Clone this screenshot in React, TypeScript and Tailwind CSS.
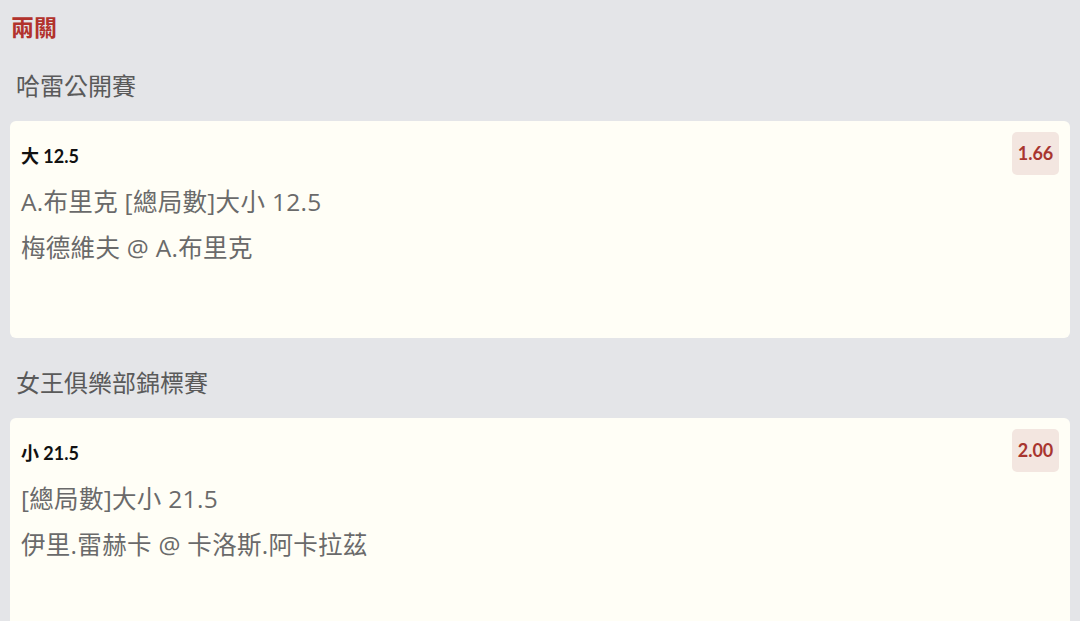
const bets = [
  {
    tournament: '哈雷公開賽',
    pick: '大 12.5',
    odds: '1.66',
    market: 'A.布里克 [總局數]大小 12.5',
    match: '梅德維夫 @ A.布里克',
  },
  {
    tournament: '女王俱樂部錦標賽',
    pick: '小 21.5',
    odds: '2.00',
    market: '[總局數]大小 21.5',
    match: '伊里.雷赫卡 @ 卡洛斯.阿卡拉茲',
  },
]

const lato = "font-['Lato','Noto_Sans_CJK_TC',sans-serif]"
const body = "font-['Open_Sans','Noto_Sans_CJK_TC',sans-serif]"

export default function App() {
  return (
    <div className={`min-h-[621px] bg-[#e4e5e8] px-[10px] pt-[14px] ${lato}`}>
      <h1 className="pl-px text-[23px] font-bold leading-[27px] text-[#b2322c]">兩關</h1>
      {bets.map((b) => (
        <div key={b.tournament}>
          <div className={`pl-[6px] pt-[30px] pb-[20px] text-[24px] leading-[30px] text-[#5a5a5a] ${body}`}>{b.tournament}</div>
          <div className="h-[217px] rounded-[6px] bg-[#fffef6] pl-[11px] pr-[11px] pt-[11px]">
            <div className="flex items-start justify-between">
              <div className="pt-[14px] text-[18px] font-bold leading-[20px] text-[#111111]">{b.pick}</div>
              <div className="flex h-[43px] w-[47px] items-center justify-center rounded-[5px] bg-[#f3e6e0] text-[18px] font-bold text-[#a8352f]">
                {b.odds}
              </div>
            </div>
            <div className={`mt-[4px] text-[24.5px] tracking-[0.3px] leading-[46px] text-[#6a6a6a] ${body}`}>
              <div>{b.market}</div>
              <div>{b.match}</div>
            </div>
          </div>
        </div>
      ))}
    </div>
  )
}
